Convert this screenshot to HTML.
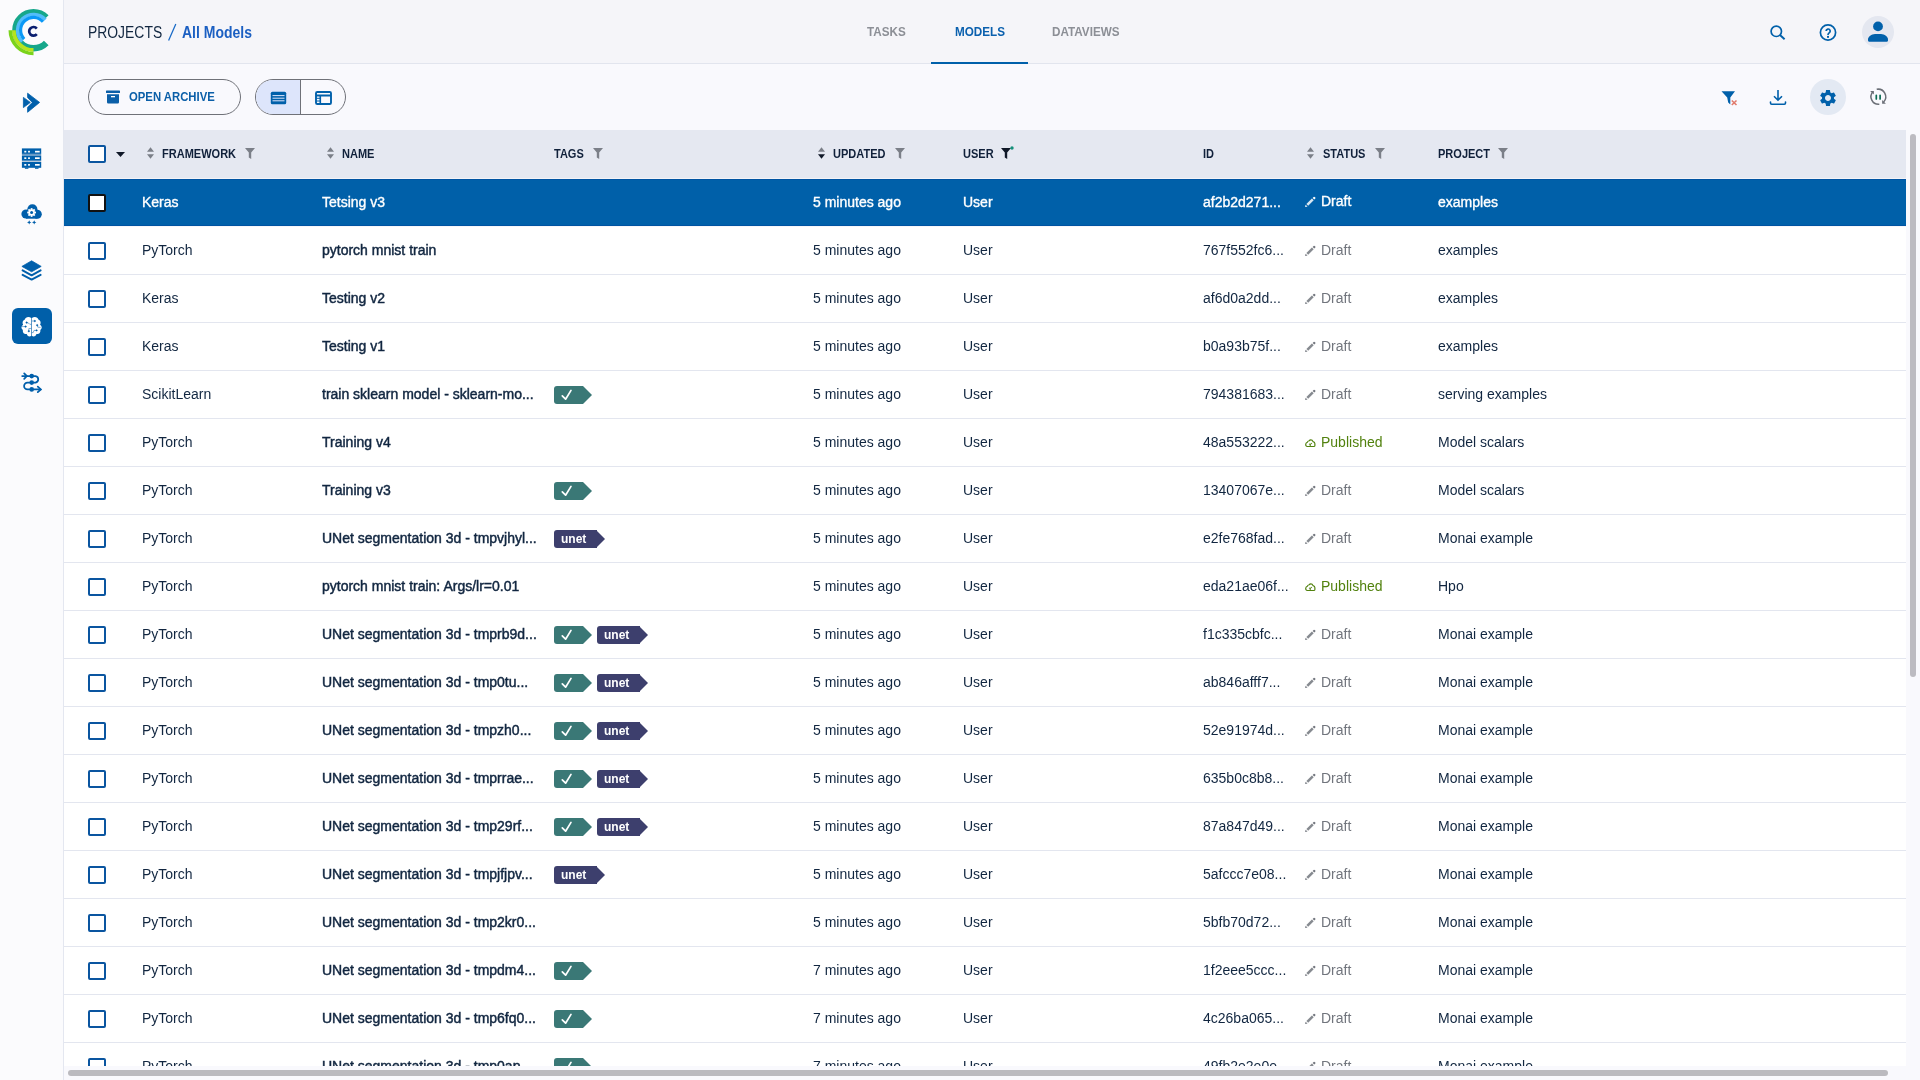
<!DOCTYPE html>
<html><head><meta charset="utf-8">
<style>
*{box-sizing:border-box;margin:0;padding:0}
html,body{width:1920px;height:1080px;overflow:hidden}
body{background:#f9f9fd;font-family:"Liberation Sans",sans-serif;color:#112640;position:relative;-webkit-font-smoothing:antialiased}
#sb,#hd,#th,#tb,#arch,#vt{will-change:transform}
.abs{position:absolute}
/* sidebar */
#sb{position:absolute;left:0;top:0;width:64px;height:1080px;background:#fbfbfd;border-right:1px solid #e4e7f0}
.nav{position:absolute;left:0;width:64px;height:40px;display:flex;align-items:center;justify-content:center;color:#0060aa}
.nav svg{display:block}
.nav.act .bg{position:absolute;left:12px;top:0;width:40px;height:36px;background:#005fa9;border-radius:7px}
/* top header */
#hd{position:absolute;left:64px;top:0;width:1856px;height:64px;background:#f5f5f9;border-bottom:1px solid #e2e5ee}
.bcp,.bcs,.bca{position:absolute;top:23px;white-space:nowrap;line-height:20px;transform-origin:0 0}
.bcp{font-size:15.8px;color:#112640;transform:scaleX(0.88)}
.bcs{font-size:17px;color:#1769c6;top:21px}
.bca{font-size:15.8px;font-weight:700;color:#1b5fc2;transform:scaleX(0.885)}
.tab{position:absolute;top:24px;font-size:13.6px;font-weight:700;color:#8c8f96;line-height:16px;transform-origin:0 0;transform:scaleX(0.86)}
.tab.on{color:#0a60ae}
#tabline{position:absolute;left:867px;top:61.5px;width:97px;height:2.5px;background:#0060aa}
.hic{position:absolute;color:#0060aa}
/* toolbar */
#arch{position:absolute;left:88px;top:79px;width:153px;height:36px;border:1px solid #6f7178;border-radius:18px;color:#0b5fa8}
#arch .t{position:absolute;left:40px;top:9px;font-size:12.8px;font-weight:700;line-height:16px;transform-origin:0 0;transform:scaleX(0.885)}
#vt{position:absolute;left:255px;top:79px;width:91px;height:36px;border:1px solid #6f7178;border-radius:18px;overflow:hidden}
#vt .l{position:absolute;left:0;top:0;width:45px;height:34px;background:#dde5fb;border-right:1px solid #6f7178}
.tic{position:absolute;color:#0060aa}
#gearbg{position:absolute;left:1810px;top:79px;width:36px;height:36px;border-radius:50%;background:#e3e9f3}
/* table */
#th{position:absolute;left:64px;top:130px;width:1842px;height:48px;background:#e5e8f1}
.h{position:absolute;top:17px;font-size:12.6px;font-weight:700;color:#10203a;line-height:15px;white-space:nowrap;transform-origin:0 0;transform:scaleX(0.875)}
.sort{position:absolute;top:17px}
.filt{position:absolute;top:18px}
#tb{position:absolute;left:64px;top:178px;width:1842px;height:888px;overflow:hidden;background:#fff}
.row{position:absolute;left:0;width:1842px;height:48px;background:#fff;border-bottom:1px solid #e3e6ef}
.row.sel{height:49px;border-top:1px solid #f3f3f7;border-bottom:1px solid #f6f6f9;box-shadow:inset 0 1px #0053a2,inset 0 -1px #0053a2}
.row.sel{background:#0060a9;color:#fff}
.cb{position:absolute;left:24px;top:15px;width:18px;height:18px;border:2px solid #0a55a0;border-radius:2px;background:#fff}
.sel .cb{border-color:#111;top:15px}
.c{position:absolute;top:15px;font-size:14px;line-height:17px;white-space:nowrap}
.fw{left:78px}
.nm{left:258px;-webkit-text-stroke:0.45px currentColor}
.tg{left:490px;top:15px;height:18px;display:flex}
.up{left:749px}
.us{left:899px}
.id{left:1139px}
.st{left:1240px;display:flex;align-items:center}
.sel .st{top:14px}
.st .si{margin-right:5px;position:relative;top:0px}
.dr{color:#71757d}
.pub{color:#52820f}
.sel .c{color:#fff;-webkit-text-stroke:0.35px #fff}
.pj{left:1374px}
.tag{position:relative;display:inline-block;height:18px;margin-right:5px;color:#fff;font-size:12px;font-weight:700;line-height:18px}
.tag .tb{display:inline-block;height:18px;border-radius:3px 0 0 3px;padding:0 0 0 5px}
.tag:after{content:"";position:absolute;right:0;top:0;border-top:9px solid transparent;border-bottom:9px solid transparent;border-left:9px solid currentColor}
.tc{color:#3a7876;padding-right:9px}
.tc .tb{background:#3a7876;color:#fff;width:29px;padding-left:6px}
.tu{color:#3d3f6d;padding-right:8px}
.tu .tb{background:#3d3f6d;color:#fff;width:43px;padding-left:7px}
/* scrollbars */
#vs{position:absolute;left:1910px;top:134px;width:6px;height:543px;border-radius:3px;background:#bcbbc1}
#hs{position:absolute;left:68px;top:1070px;width:1820px;height:6px;border-radius:3px;background:#bbbabf}
</style></head>
<body>
<div id="sb">
  <!-- logo -->
  <svg class="abs" style="left:0;top:0" width="64" height="64" viewBox="0 0 64 64">
    <path d="M46.26 17.54 A18.05 18.05 0 1 0 46.26 43.06" fill="none" stroke="#16a78b" stroke-width="6.5"/>
    <path d="M45.43 19.56 A16.05 16.05 0 1 0 22.15 41.65" fill="none" stroke="#52bdf9" stroke-width="3.3"/>
    <path d="M43.01 21.74 A12.8 12.8 0 1 0 24.14 39.03" fill="none" stroke="#0a98f6" stroke-width="3.2"/>
    <path d="M10.3 30.3 A23.2 23.2 0 0 0 33.5 53.5" fill="none" stroke="#7bd31b" stroke-width="3.6"/>
    <path d="M13.9 30.3 A19.6 19.6 0 0 0 33.5 49.9" fill="none" stroke="#b7e41d" stroke-width="3.6"/>
    <path d="M36.79 28.54 A4.3 4.3 0 1 0 36.79 34.06" fill="none" stroke="#0b1f70" stroke-width="2.7"/>
  </svg>
  <!-- nav icons -->
  <div class="abs" style="left:12px;top:308px;width:40px;height:36px;background:#005fa9;border-radius:6px"></div>
  <svg class="abs" style="left:0;top:0" width="64" height="420" viewBox="0 0 64 420">
    <g fill="#005fab" stroke="#005fab" stroke-linejoin="round">
      <path d="M27.6 93.2 L39.6 102.4 L27.6 112.3 L27.6 107.3 L32.3 102.4 L27.6 97.6 Z" stroke-width="0.8"/>
      <path d="M23.4 97.4 L30.3 102.4 L23.4 107.6 Z" stroke-width="0.8"/>
    </g>
    <g fill="#005fab">
      <rect x="21.9" y="148.4" width="19.3" height="5.5"/>
      <rect x="21.9" y="153.9" width="19.3" height="2" fill="#6a9bc6"/>
      <rect x="21.9" y="155.9" width="19.3" height="4.9"/>
      <rect x="21.9" y="160.8" width="19.3" height="1.2" fill="#b9cadc"/>
      <rect x="21.9" y="162" width="19.3" height="5.8"/>
      <rect x="24.9" y="167.5" width="3.5" height="1.3"/>
      <rect x="35" y="167.5" width="3.5" height="1.3"/>
    </g>
    <g fill="#fff">
      <rect x="24.3" y="150.8" width="2" height="1.7"/><rect x="28.1" y="150.8" width="1.8" height="1.7"/><rect x="35" y="150.8" width="4.7" height="1.7"/>
      <rect x="24.3" y="157.3" width="2" height="1.7"/><rect x="28.1" y="157.3" width="1.8" height="1.7"/><rect x="35" y="157.3" width="4.7" height="1.7"/>
      <rect x="24.3" y="164" width="2" height="1.7"/><rect x="28.1" y="164" width="1.8" height="1.7"/><rect x="35" y="164" width="4.7" height="1.7"/>
    </g>
    <!-- cloud -->
    <g fill="#005fab">
      <circle cx="26" cy="214" r="4.6"/>
      <circle cx="32.4" cy="209.4" r="5.1"/>
      <circle cx="37.3" cy="214.2" r="4.5"/>
      <rect x="26" y="212" width="11.3" height="6.7"/>
      <path d="M29.2 220.2 L29.9 221.7 L31.4 222.4 L29.9 223.1 L29.2 224.6 L28.5 223.1 L27 222.4 L28.5 221.7 Z"/>
      <path d="M34.2 220.2 L34.9 221.7 L36.4 222.4 L34.9 223.1 L34.2 224.6 L33.5 223.1 L32 222.4 L33.5 221.7 Z"/>
    </g>
    <g transform="translate(31.6 212.5)">
      <circle r="3.2" fill="#fff"/>
      <g fill="#fff"><rect x="-0.9" y="-4.4" width="1.8" height="8.8"/><rect x="-4.4" y="-0.9" width="8.8" height="1.8"/><rect x="-0.9" y="-4.4" width="1.8" height="8.8" transform="rotate(45)"/><rect x="-0.9" y="-4.4" width="1.8" height="8.8" transform="rotate(-45)"/></g>
      <circle r="1.5" fill="#005fab"/>
    </g>
    <!-- layers -->
    <path d="M21.9 266.4 L31.6 260.8 L41.2 266.4 L31.6 271.8 Z" fill="#005fab" stroke="#005fab" stroke-width="0.8" stroke-linejoin="round"/>
    <path d="M22.6 270.4 L31.6 275.3 L40.6 270.4" fill="none" stroke="#005fab" stroke-width="2" stroke-linecap="round" stroke-linejoin="round"/>
    <path d="M22.6 274.9 L31.6 279.6 L40.6 274.9" fill="none" stroke="#005fab" stroke-width="2" stroke-linecap="round" stroke-linejoin="round"/>
    <!-- brain -->
    <g fill="#fff">
      <path d="M31.3 318 C29 316 25.4 316.8 24.8 319.5 C22.5 320.3 22 323.1 23.1 324.7 C20.9 326.1 20.9 328.6 22.9 329.9 C22.3 332.4 24.3 334.4 26.7 334 C27.5 336.6 30 337.2 31.3 335.8 Z"/>
      <path d="M31.9 318 C34.2 316 37.8 316.8 38.4 319.5 C40.7 320.3 41.2 323.1 40.1 324.7 C42.3 326.1 42.3 328.6 40.3 329.9 C40.9 332.4 38.9 334.4 36.5 334 C35.7 336.6 33.2 337.2 31.9 335.8 Z"/>
    </g>
    <g stroke="#005fa9" stroke-width="0.5" fill="#005fa9">
      <path d="M21.5 326.6 H25.3" fill="none"/><circle cx="25.6" cy="326.6" r="0.75"/>
      <circle cx="26.6" cy="322.6" r="0.75"/><path d="M26.6 322.6 L28.6 323.1 L29.8 324.3 L31.3 324.3" fill="none"/>
      <circle cx="34.8" cy="321" r="0.75"/><path d="M31.9 321 H34.8" fill="none"/>
      <circle cx="37.2" cy="325.2" r="0.75"/><path d="M37.2 325.2 L37.8 327.2 L40.6 327.4" fill="none"/>
      <circle cx="28.8" cy="331.2" r="0.75"/><path d="M28.8 331.2 V328.6 L31.3 328.4" fill="none"/>
      <circle cx="36.6" cy="330.4" r="0.7"/><path d="M36.6 330.4 H34 L33.2 332.6 H31.9" fill="none"/>
    </g>
    <!-- pipeline -->
    <g fill="none" stroke="#005fab" stroke-width="1.8" stroke-linecap="round">
      <path d="M22.2 376.1 H35.5 A3.3 3.3 0 0 1 35.5 382.6 H27.5 A3.4 3.4 0 0 0 27.5 389.4 H40.5"/>
      <path d="M24.2 373.4 L26.8 376.1 L24.2 378.8"/>
      <path d="M37.8 386.7 L40.8 389.4 L37.8 392.1"/>
    </g>
    <g fill="#005fab">
      <circle cx="31.7" cy="376.1" r="2.3"/><circle cx="31.7" cy="382.6" r="2.3"/><circle cx="31.7" cy="389.4" r="2.3"/>
    </g>
  </svg>
</div>

<div id="hd">
  <div class="bcp" style="left:24px">PROJECTS</div><svg class="abs" style="left:102px;top:23px" width="12" height="19" viewBox="0 0 12 19"><path d="M9.8 1 L2.6 17.6" stroke="#1769c6" stroke-width="1.3"/></svg><div class="bca" style="left:118px">All Models</div>
  <div class="tab" style="left:803px">TASKS</div>
  <div class="tab on" style="left:891px">MODELS</div>
  <div class="tab" style="left:988px">DATAVIEWS</div>
  <div id="tabline"></div>
  <!-- search -->
  <svg class="hic" style="left:1706px;top:25px" width="16" height="16" viewBox="0 0 16 16"><circle cx="6.3" cy="6.3" r="5.2" fill="none" stroke="#0060aa" stroke-width="1.7"/><path d="M10 10 L14.6 14.3" stroke="#0060aa" stroke-width="1.9"/></svg>
  <!-- help -->
  <svg class="hic" style="left:1755px;top:23px" width="18" height="19" viewBox="0 0 18 19"><circle cx="9" cy="9.5" r="7.6" fill="none" stroke="#0060aa" stroke-width="1.7"/><path d="M7.1 8.1 A2.05 2.05 0 1 1 10.1 9.9 C9.3 10.4 9 10.8 9 11.9" fill="none" stroke="#0060aa" stroke-width="1.7"/><rect x="8" y="12.9" width="2" height="1.9" fill="#0060aa"/></svg>
  <!-- avatar -->
  <div class="abs" style="left:1798px;top:16px;width:32px;height:32px;border-radius:50%;background:#e4e7f0"></div>
  <svg class="hic" style="left:1804px;top:21px" width="20" height="21" viewBox="0 0 20 21"><circle cx="10" cy="5.4" r="4.9" fill="#0060aa"/><path d="M0 18.2 C0 15.6 3.5 13 7 12.9 L13 12.9 C16.5 13 20 15.6 20 18.2 V19.6 Q20 20.7 19 20.7 H1 Q0 20.7 0 19.6 Z" fill="#0060aa"/></svg>
</div>

<!-- toolbar -->
<div id="arch">
  <svg class="abs" style="left:17px;top:10px" width="14" height="14" viewBox="0 0 14 14"><rect x="0" y="0.5" width="14" height="2.6" rx="0.6" fill="#0b5fa8"/><path d="M1 4.2 h12 v8 a1.3 1.3 0 0 1 -1.3 1.3 h-9.4 a1.3 1.3 0 0 1 -1.3 -1.3 Z" fill="#0b5fa8"/><rect x="5" y="6" width="4" height="1.3" fill="#fff"/></svg>
  <div class="t">OPEN ARCHIVE</div>
</div>
<div id="vt">
  <div class="l"></div>
  <svg class="abs" style="left:14px;top:11px" width="17" height="14" viewBox="0 0 17 14"><rect x="0.8" y="0.8" width="15.4" height="12.4" rx="1.5" fill="#0060aa"/><path d="M2.5 4.6 h12 M2.5 7.2 h12 M2.5 9.8 h12" stroke="#dde5fb" stroke-width="1"/></svg>
  <svg class="abs" style="left:59px;top:11px" width="17" height="14" viewBox="0 0 17 14"><rect x="1" y="1" width="15" height="12" rx="1.3" fill="none" stroke="#0060aa" stroke-width="1.9"/><path d="M1 4.5 h15" stroke="#0060aa" stroke-width="1.9"/><path d="M5.3 4.5 v8.5" stroke="#0060aa" stroke-width="1.6"/><path d="M1.5 7.3 h4 M1.5 10 h4" stroke="#0060aa" stroke-width="1"/></svg>
</div>
<!-- right toolbar icons -->
<svg class="tic" style="left:1721px;top:91px" width="17" height="15" viewBox="0 0 17 15"><path d="M0.5 0.2 H14 L9.3 6.4 V13.6 L7.2 11.6 L6.2 6.4 Z" fill="#0060aa"/><path d="M10.8 9.5 L15.5 14 M15.5 9.5 L10.8 14" stroke="#e07a6c" stroke-width="1.6"/></svg>
<svg class="tic" style="left:1769px;top:89px" width="18" height="17" viewBox="0 0 18 17"><path d="M9 1 V11 M5 7.3 L9 11.2 L13 7.3" fill="none" stroke="#0060aa" stroke-width="1.6"/><path d="M1.5 13 V14 Q1.5 15.2 2.7 15.2 H15.3 Q16.5 15.2 16.5 14 V13" fill="none" stroke="#0060aa" stroke-width="1.6" stroke-linecap="round"/></svg>
<div id="gearbg"></div>
<svg class="tic" style="left:1818px;top:88px" width="20" height="20" viewBox="0 0 24 24"><path fill="#0060aa" d="M19.14 12.94c.04-.3.06-.61.06-.94 0-.32-.02-.64-.07-.94l2.03-1.58a.49.49 0 0 0 .12-.61l-1.92-3.32a.488.488 0 0 0-.59-.22l-2.39.96c-.5-.38-1.03-.7-1.62-.94l-.36-2.54a.484.484 0 0 0-.48-.41h-3.84c-.24 0-.43.17-.47.41l-.36 2.54c-.59.24-1.13.57-1.62.94l-2.39-.96c-.22-.08-.47 0-.59.22L2.74 8.87c-.12.21-.08.47.12.61l2.03 1.58c-.05.3-.09.63-.09.94s.02.64.07.94l-2.03 1.58a.49.49 0 0 0-.12.61l1.92 3.32c.12.22.37.29.59.22l2.39-.96c.5.38 1.03.7 1.62.94l.36 2.54c.05.24.24.41.48.41h3.84c.24 0 .44-.17.47-.41l.36-2.54c.59-.24 1.13-.56 1.62-.94l2.39.96c.22.08.47 0 .59-.22l1.92-3.32c.12-.22.07-.47-.12-.61l-2.01-1.58zM12 15.6c-1.98 0-3.6-1.62-3.6-3.6s1.62-3.6 3.6-3.6 3.6 1.62 3.6 3.6-1.62 3.6-3.6 3.6z"/></svg>
<svg class="tic" style="left:1864px;top:84px" width="28" height="26" viewBox="0 0 28 26"><path d="M8.9 7.7 A7.6 7.6 0 0 0 15.3 20.3" fill="none" stroke="#6b6f77" stroke-width="1.5"/><path d="M12.7 5.3 A7.6 7.6 0 0 1 19.6 18" fill="none" stroke="#6b6f77" stroke-width="1.5"/><path d="M6.1 7 H9.9 V10.6 Z" fill="#6b6f77"/><path d="M18.1 15.9 V19.8 H21.9 Z" fill="#6b6f77"/><path d="M12.3 11.3 V14.9 M16.1 11.3 V14.9" stroke="#0b6b52" stroke-width="1.7" stroke-linecap="round"/></svg>

<!-- table header -->
<div id="th">
  <span class="abs" style="left:24px;top:15px;width:18px;height:18px;border:2px solid #0a55a0;border-radius:2px;background:#fff"></span>
  <svg class="abs" style="left:52px;top:22px" width="9" height="6" viewBox="0 0 9 6"><path d="M0 0 H9 L4.5 5 Z" fill="#101828"/></svg>
  <svg class="sort" style="left:83px" width="7" height="12" viewBox="0 0 7 12"><path d="M0 4.8 L3.5 0.3 L7 4.8 Z M0 7.2 L3.5 11.7 L7 7.2 Z" fill="#7b7f88"/></svg>
  <span class="h" style="left:98px">FRAMEWORK</span>
  <svg class="filt" style="left:181px" width="10" height="11" viewBox="0 0 10 11"><path d="M0 0 H10 L6.2 4.5 V11 L3.8 9.5 V4.5 Z" fill="#7b7f88"/></svg>
  <svg class="sort" style="left:263px" width="7" height="12" viewBox="0 0 7 12"><path d="M0 4.8 L3.5 0.3 L7 4.8 Z M0 7.2 L3.5 11.7 L7 7.2 Z" fill="#7b7f88"/></svg>
  <span class="h" style="left:278px">NAME</span>
  <span class="h" style="left:490px">TAGS</span>
  <svg class="filt" style="left:529px" width="10" height="11" viewBox="0 0 10 11"><path d="M0 0 H10 L6.2 4.5 V11 L3.8 9.5 V4.5 Z" fill="#7b7f88"/></svg>
  <svg class="sort" style="left:754px" width="7" height="12" viewBox="0 0 7 12"><path d="M0 4.8 L3.5 0.3 L7 4.8 Z" fill="#7b7f88"/><path d="M0 7.2 L3.5 11.7 L7 7.2 Z" fill="#101828"/></svg>
  <span class="h" style="left:769px">UPDATED</span>
  <svg class="filt" style="left:831px" width="10" height="11" viewBox="0 0 10 11"><path d="M0 0 H10 L6.2 4.5 V11 L3.8 9.5 V4.5 Z" fill="#7b7f88"/></svg>
  <span class="h" style="left:899px">USER</span>
  <svg class="abs" style="left:937px;top:16px" width="13" height="13" viewBox="0 0 13 13"><path d="M0 2 H10 L6.2 6.5 V13 L3.8 11.5 V6.5 Z" fill="#101828"/><circle cx="11" cy="2" r="1.7" fill="#14907a"/></svg>
  <span class="h" style="left:1139px">ID</span>
  <svg class="sort" style="left:1243px" width="7" height="12" viewBox="0 0 7 12"><path d="M0 4.8 L3.5 0.3 L7 4.8 Z M0 7.2 L3.5 11.7 L7 7.2 Z" fill="#7b7f88"/></svg>
  <span class="h" style="left:1259px">STATUS</span>
  <svg class="filt" style="left:1311px" width="10" height="11" viewBox="0 0 10 11"><path d="M0 0 H10 L6.2 4.5 V11 L3.8 9.5 V4.5 Z" fill="#7b7f88"/></svg>
  <span class="h" style="left:1374px">PROJECT</span>
  <svg class="filt" style="left:1434px" width="10" height="11" viewBox="0 0 10 11"><path d="M0 0 H10 L6.2 4.5 V11 L3.8 9.5 V4.5 Z" fill="#7b7f88"/></svg>
</div>

<div id="tb">
<div class="row sel" style="top:0px">
<span class="cb"></span>
<span class="c fw">Keras</span>
<span class="c nm">Tetsing v3</span>
<span class="c tg"></span>
<span class="c up">5 minutes ago</span>
<span class="c us">User</span>
<span class="c id">af2b2d271...</span>
<span class="c st dr"><svg class="si" width="12" height="12" viewBox="0 0 12 12"><path d="M1.1 11.1 L1.6 8.7 L3.5 10.6 Z" fill="currentColor"/><path d="M2.4 8 L7.9 2.5 L9.7 4.3 L4.2 9.8 Z" fill="currentColor" fill-opacity="0.85"/><path d="M8.6 1.9 L9.6 0.9 Q10.1 0.5 10.6 0.9 L11.3 1.6 Q11.7 2.1 11.3 2.6 L10.3 3.6 Z" fill="currentColor"/></svg>Draft</span>
<span class="c pj">examples</span>
</div>
<div class="row" style="top:49px">
<span class="cb"></span>
<span class="c fw">PyTorch</span>
<span class="c nm">pytorch mnist train</span>
<span class="c tg"></span>
<span class="c up">5 minutes ago</span>
<span class="c us">User</span>
<span class="c id">767f552fc6...</span>
<span class="c st dr"><svg class="si" width="12" height="12" viewBox="0 0 12 12"><path d="M1.1 11.1 L1.6 8.7 L3.5 10.6 Z" fill="currentColor"/><path d="M2.4 8 L7.9 2.5 L9.7 4.3 L4.2 9.8 Z" fill="currentColor" fill-opacity="0.85"/><path d="M8.6 1.9 L9.6 0.9 Q10.1 0.5 10.6 0.9 L11.3 1.6 Q11.7 2.1 11.3 2.6 L10.3 3.6 Z" fill="currentColor"/></svg>Draft</span>
<span class="c pj">examples</span>
</div>
<div class="row" style="top:97px">
<span class="cb"></span>
<span class="c fw">Keras</span>
<span class="c nm">Testing v2</span>
<span class="c tg"></span>
<span class="c up">5 minutes ago</span>
<span class="c us">User</span>
<span class="c id">af6d0a2dd...</span>
<span class="c st dr"><svg class="si" width="12" height="12" viewBox="0 0 12 12"><path d="M1.1 11.1 L1.6 8.7 L3.5 10.6 Z" fill="currentColor"/><path d="M2.4 8 L7.9 2.5 L9.7 4.3 L4.2 9.8 Z" fill="currentColor" fill-opacity="0.85"/><path d="M8.6 1.9 L9.6 0.9 Q10.1 0.5 10.6 0.9 L11.3 1.6 Q11.7 2.1 11.3 2.6 L10.3 3.6 Z" fill="currentColor"/></svg>Draft</span>
<span class="c pj">examples</span>
</div>
<div class="row" style="top:145px">
<span class="cb"></span>
<span class="c fw">Keras</span>
<span class="c nm">Testing v1</span>
<span class="c tg"></span>
<span class="c up">5 minutes ago</span>
<span class="c us">User</span>
<span class="c id">b0a93b75f...</span>
<span class="c st dr"><svg class="si" width="12" height="12" viewBox="0 0 12 12"><path d="M1.1 11.1 L1.6 8.7 L3.5 10.6 Z" fill="currentColor"/><path d="M2.4 8 L7.9 2.5 L9.7 4.3 L4.2 9.8 Z" fill="currentColor" fill-opacity="0.85"/><path d="M8.6 1.9 L9.6 0.9 Q10.1 0.5 10.6 0.9 L11.3 1.6 Q11.7 2.1 11.3 2.6 L10.3 3.6 Z" fill="currentColor"/></svg>Draft</span>
<span class="c pj">examples</span>
</div>
<div class="row" style="top:193px">
<span class="cb"></span>
<span class="c fw">ScikitLearn</span>
<span class="c nm">train sklearn model - sklearn-mo...</span>
<span class="c tg"><span class="tag tc"><span class="tb"><svg width="29" height="18" viewBox="0 0 29 18" style="display:block;margin-left:-6px"><path d="M8.3 9.8 L11.6 13.2 L17 4.4" fill="none" stroke="#fff" stroke-width="1.7" stroke-linecap="round" stroke-linejoin="round"/></svg></span></span></span>
<span class="c up">5 minutes ago</span>
<span class="c us">User</span>
<span class="c id">794381683...</span>
<span class="c st dr"><svg class="si" width="12" height="12" viewBox="0 0 12 12"><path d="M1.1 11.1 L1.6 8.7 L3.5 10.6 Z" fill="currentColor"/><path d="M2.4 8 L7.9 2.5 L9.7 4.3 L4.2 9.8 Z" fill="currentColor" fill-opacity="0.85"/><path d="M8.6 1.9 L9.6 0.9 Q10.1 0.5 10.6 0.9 L11.3 1.6 Q11.7 2.1 11.3 2.6 L10.3 3.6 Z" fill="currentColor"/></svg>Draft</span>
<span class="c pj">serving examples</span>
</div>
<div class="row" style="top:241px">
<span class="cb"></span>
<span class="c fw">PyTorch</span>
<span class="c nm">Training v4</span>
<span class="c tg"></span>
<span class="c up">5 minutes ago</span>
<span class="c us">User</span>
<span class="c id">48a553222...</span>
<span class="c st pub"><svg class="si" width="12" height="12" viewBox="0 0 12 12"><g transform="translate(0.7 0) scale(1.04 1)"><path d="M2.6 9.5 C1.2 9.5 0.9 8.2 1 7.3 C1.1 6.2 1.8 5.6 2.5 5.3 C2.7 4.3 3.6 3.8 4.4 3.7 C4.8 2.9 5.4 2.9 5.9 2.9 C7 2.9 7.6 3.5 8 4.6 C9.2 4.9 9.8 5.6 9.8 6.8 L9.8 8.4 C9.8 9.1 9.3 9.5 8.6 9.5 Z" fill="none" stroke="currentColor" stroke-width="1.15"/><path d="M4.1 6.9 L5.3 7.5 L6.9 6 M5.3 7.5 V9.5" fill="none" stroke="currentColor" stroke-width="1"/></g></svg>Published</span>
<span class="c pj">Model scalars</span>
</div>
<div class="row" style="top:289px">
<span class="cb"></span>
<span class="c fw">PyTorch</span>
<span class="c nm">Training v3</span>
<span class="c tg"><span class="tag tc"><span class="tb"><svg width="29" height="18" viewBox="0 0 29 18" style="display:block;margin-left:-6px"><path d="M8.3 9.8 L11.6 13.2 L17 4.4" fill="none" stroke="#fff" stroke-width="1.7" stroke-linecap="round" stroke-linejoin="round"/></svg></span></span></span>
<span class="c up">5 minutes ago</span>
<span class="c us">User</span>
<span class="c id">13407067e...</span>
<span class="c st dr"><svg class="si" width="12" height="12" viewBox="0 0 12 12"><path d="M1.1 11.1 L1.6 8.7 L3.5 10.6 Z" fill="currentColor"/><path d="M2.4 8 L7.9 2.5 L9.7 4.3 L4.2 9.8 Z" fill="currentColor" fill-opacity="0.85"/><path d="M8.6 1.9 L9.6 0.9 Q10.1 0.5 10.6 0.9 L11.3 1.6 Q11.7 2.1 11.3 2.6 L10.3 3.6 Z" fill="currentColor"/></svg>Draft</span>
<span class="c pj">Model scalars</span>
</div>
<div class="row" style="top:337px">
<span class="cb"></span>
<span class="c fw">PyTorch</span>
<span class="c nm">UNet segmentation 3d - tmpvjhyl...</span>
<span class="c tg"><span class="tag tu"><span class="tb">unet</span></span></span>
<span class="c up">5 minutes ago</span>
<span class="c us">User</span>
<span class="c id">e2fe768fad...</span>
<span class="c st dr"><svg class="si" width="12" height="12" viewBox="0 0 12 12"><path d="M1.1 11.1 L1.6 8.7 L3.5 10.6 Z" fill="currentColor"/><path d="M2.4 8 L7.9 2.5 L9.7 4.3 L4.2 9.8 Z" fill="currentColor" fill-opacity="0.85"/><path d="M8.6 1.9 L9.6 0.9 Q10.1 0.5 10.6 0.9 L11.3 1.6 Q11.7 2.1 11.3 2.6 L10.3 3.6 Z" fill="currentColor"/></svg>Draft</span>
<span class="c pj">Monai example</span>
</div>
<div class="row" style="top:385px">
<span class="cb"></span>
<span class="c fw">PyTorch</span>
<span class="c nm">pytorch mnist train: Args/lr=0.01</span>
<span class="c tg"></span>
<span class="c up">5 minutes ago</span>
<span class="c us">User</span>
<span class="c id">eda21ae06f...</span>
<span class="c st pub"><svg class="si" width="12" height="12" viewBox="0 0 12 12"><g transform="translate(0.7 0) scale(1.04 1)"><path d="M2.6 9.5 C1.2 9.5 0.9 8.2 1 7.3 C1.1 6.2 1.8 5.6 2.5 5.3 C2.7 4.3 3.6 3.8 4.4 3.7 C4.8 2.9 5.4 2.9 5.9 2.9 C7 2.9 7.6 3.5 8 4.6 C9.2 4.9 9.8 5.6 9.8 6.8 L9.8 8.4 C9.8 9.1 9.3 9.5 8.6 9.5 Z" fill="none" stroke="currentColor" stroke-width="1.15"/><path d="M4.1 6.9 L5.3 7.5 L6.9 6 M5.3 7.5 V9.5" fill="none" stroke="currentColor" stroke-width="1"/></g></svg>Published</span>
<span class="c pj">Hpo</span>
</div>
<div class="row" style="top:433px">
<span class="cb"></span>
<span class="c fw">PyTorch</span>
<span class="c nm">UNet segmentation 3d - tmprb9d...</span>
<span class="c tg"><span class="tag tc"><span class="tb"><svg width="29" height="18" viewBox="0 0 29 18" style="display:block;margin-left:-6px"><path d="M8.3 9.8 L11.6 13.2 L17 4.4" fill="none" stroke="#fff" stroke-width="1.7" stroke-linecap="round" stroke-linejoin="round"/></svg></span></span><span class="tag tu"><span class="tb">unet</span></span></span>
<span class="c up">5 minutes ago</span>
<span class="c us">User</span>
<span class="c id">f1c335cbfc...</span>
<span class="c st dr"><svg class="si" width="12" height="12" viewBox="0 0 12 12"><path d="M1.1 11.1 L1.6 8.7 L3.5 10.6 Z" fill="currentColor"/><path d="M2.4 8 L7.9 2.5 L9.7 4.3 L4.2 9.8 Z" fill="currentColor" fill-opacity="0.85"/><path d="M8.6 1.9 L9.6 0.9 Q10.1 0.5 10.6 0.9 L11.3 1.6 Q11.7 2.1 11.3 2.6 L10.3 3.6 Z" fill="currentColor"/></svg>Draft</span>
<span class="c pj">Monai example</span>
</div>
<div class="row" style="top:481px">
<span class="cb"></span>
<span class="c fw">PyTorch</span>
<span class="c nm">UNet segmentation 3d - tmp0tu...</span>
<span class="c tg"><span class="tag tc"><span class="tb"><svg width="29" height="18" viewBox="0 0 29 18" style="display:block;margin-left:-6px"><path d="M8.3 9.8 L11.6 13.2 L17 4.4" fill="none" stroke="#fff" stroke-width="1.7" stroke-linecap="round" stroke-linejoin="round"/></svg></span></span><span class="tag tu"><span class="tb">unet</span></span></span>
<span class="c up">5 minutes ago</span>
<span class="c us">User</span>
<span class="c id">ab846afff7...</span>
<span class="c st dr"><svg class="si" width="12" height="12" viewBox="0 0 12 12"><path d="M1.1 11.1 L1.6 8.7 L3.5 10.6 Z" fill="currentColor"/><path d="M2.4 8 L7.9 2.5 L9.7 4.3 L4.2 9.8 Z" fill="currentColor" fill-opacity="0.85"/><path d="M8.6 1.9 L9.6 0.9 Q10.1 0.5 10.6 0.9 L11.3 1.6 Q11.7 2.1 11.3 2.6 L10.3 3.6 Z" fill="currentColor"/></svg>Draft</span>
<span class="c pj">Monai example</span>
</div>
<div class="row" style="top:529px">
<span class="cb"></span>
<span class="c fw">PyTorch</span>
<span class="c nm">UNet segmentation 3d - tmpzh0...</span>
<span class="c tg"><span class="tag tc"><span class="tb"><svg width="29" height="18" viewBox="0 0 29 18" style="display:block;margin-left:-6px"><path d="M8.3 9.8 L11.6 13.2 L17 4.4" fill="none" stroke="#fff" stroke-width="1.7" stroke-linecap="round" stroke-linejoin="round"/></svg></span></span><span class="tag tu"><span class="tb">unet</span></span></span>
<span class="c up">5 minutes ago</span>
<span class="c us">User</span>
<span class="c id">52e91974d...</span>
<span class="c st dr"><svg class="si" width="12" height="12" viewBox="0 0 12 12"><path d="M1.1 11.1 L1.6 8.7 L3.5 10.6 Z" fill="currentColor"/><path d="M2.4 8 L7.9 2.5 L9.7 4.3 L4.2 9.8 Z" fill="currentColor" fill-opacity="0.85"/><path d="M8.6 1.9 L9.6 0.9 Q10.1 0.5 10.6 0.9 L11.3 1.6 Q11.7 2.1 11.3 2.6 L10.3 3.6 Z" fill="currentColor"/></svg>Draft</span>
<span class="c pj">Monai example</span>
</div>
<div class="row" style="top:577px">
<span class="cb"></span>
<span class="c fw">PyTorch</span>
<span class="c nm">UNet segmentation 3d - tmprrae...</span>
<span class="c tg"><span class="tag tc"><span class="tb"><svg width="29" height="18" viewBox="0 0 29 18" style="display:block;margin-left:-6px"><path d="M8.3 9.8 L11.6 13.2 L17 4.4" fill="none" stroke="#fff" stroke-width="1.7" stroke-linecap="round" stroke-linejoin="round"/></svg></span></span><span class="tag tu"><span class="tb">unet</span></span></span>
<span class="c up">5 minutes ago</span>
<span class="c us">User</span>
<span class="c id">635b0c8b8...</span>
<span class="c st dr"><svg class="si" width="12" height="12" viewBox="0 0 12 12"><path d="M1.1 11.1 L1.6 8.7 L3.5 10.6 Z" fill="currentColor"/><path d="M2.4 8 L7.9 2.5 L9.7 4.3 L4.2 9.8 Z" fill="currentColor" fill-opacity="0.85"/><path d="M8.6 1.9 L9.6 0.9 Q10.1 0.5 10.6 0.9 L11.3 1.6 Q11.7 2.1 11.3 2.6 L10.3 3.6 Z" fill="currentColor"/></svg>Draft</span>
<span class="c pj">Monai example</span>
</div>
<div class="row" style="top:625px">
<span class="cb"></span>
<span class="c fw">PyTorch</span>
<span class="c nm">UNet segmentation 3d - tmp29rf...</span>
<span class="c tg"><span class="tag tc"><span class="tb"><svg width="29" height="18" viewBox="0 0 29 18" style="display:block;margin-left:-6px"><path d="M8.3 9.8 L11.6 13.2 L17 4.4" fill="none" stroke="#fff" stroke-width="1.7" stroke-linecap="round" stroke-linejoin="round"/></svg></span></span><span class="tag tu"><span class="tb">unet</span></span></span>
<span class="c up">5 minutes ago</span>
<span class="c us">User</span>
<span class="c id">87a847d49...</span>
<span class="c st dr"><svg class="si" width="12" height="12" viewBox="0 0 12 12"><path d="M1.1 11.1 L1.6 8.7 L3.5 10.6 Z" fill="currentColor"/><path d="M2.4 8 L7.9 2.5 L9.7 4.3 L4.2 9.8 Z" fill="currentColor" fill-opacity="0.85"/><path d="M8.6 1.9 L9.6 0.9 Q10.1 0.5 10.6 0.9 L11.3 1.6 Q11.7 2.1 11.3 2.6 L10.3 3.6 Z" fill="currentColor"/></svg>Draft</span>
<span class="c pj">Monai example</span>
</div>
<div class="row" style="top:673px">
<span class="cb"></span>
<span class="c fw">PyTorch</span>
<span class="c nm">UNet segmentation 3d - tmpjfjpv...</span>
<span class="c tg"><span class="tag tu"><span class="tb">unet</span></span></span>
<span class="c up">5 minutes ago</span>
<span class="c us">User</span>
<span class="c id">5afccc7e08...</span>
<span class="c st dr"><svg class="si" width="12" height="12" viewBox="0 0 12 12"><path d="M1.1 11.1 L1.6 8.7 L3.5 10.6 Z" fill="currentColor"/><path d="M2.4 8 L7.9 2.5 L9.7 4.3 L4.2 9.8 Z" fill="currentColor" fill-opacity="0.85"/><path d="M8.6 1.9 L9.6 0.9 Q10.1 0.5 10.6 0.9 L11.3 1.6 Q11.7 2.1 11.3 2.6 L10.3 3.6 Z" fill="currentColor"/></svg>Draft</span>
<span class="c pj">Monai example</span>
</div>
<div class="row" style="top:721px">
<span class="cb"></span>
<span class="c fw">PyTorch</span>
<span class="c nm">UNet segmentation 3d - tmp2kr0...</span>
<span class="c tg"></span>
<span class="c up">5 minutes ago</span>
<span class="c us">User</span>
<span class="c id">5bfb70d72...</span>
<span class="c st dr"><svg class="si" width="12" height="12" viewBox="0 0 12 12"><path d="M1.1 11.1 L1.6 8.7 L3.5 10.6 Z" fill="currentColor"/><path d="M2.4 8 L7.9 2.5 L9.7 4.3 L4.2 9.8 Z" fill="currentColor" fill-opacity="0.85"/><path d="M8.6 1.9 L9.6 0.9 Q10.1 0.5 10.6 0.9 L11.3 1.6 Q11.7 2.1 11.3 2.6 L10.3 3.6 Z" fill="currentColor"/></svg>Draft</span>
<span class="c pj">Monai example</span>
</div>
<div class="row" style="top:769px">
<span class="cb"></span>
<span class="c fw">PyTorch</span>
<span class="c nm">UNet segmentation 3d - tmpdm4...</span>
<span class="c tg"><span class="tag tc"><span class="tb"><svg width="29" height="18" viewBox="0 0 29 18" style="display:block;margin-left:-6px"><path d="M8.3 9.8 L11.6 13.2 L17 4.4" fill="none" stroke="#fff" stroke-width="1.7" stroke-linecap="round" stroke-linejoin="round"/></svg></span></span></span>
<span class="c up">7 minutes ago</span>
<span class="c us">User</span>
<span class="c id">1f2eee5ccc...</span>
<span class="c st dr"><svg class="si" width="12" height="12" viewBox="0 0 12 12"><path d="M1.1 11.1 L1.6 8.7 L3.5 10.6 Z" fill="currentColor"/><path d="M2.4 8 L7.9 2.5 L9.7 4.3 L4.2 9.8 Z" fill="currentColor" fill-opacity="0.85"/><path d="M8.6 1.9 L9.6 0.9 Q10.1 0.5 10.6 0.9 L11.3 1.6 Q11.7 2.1 11.3 2.6 L10.3 3.6 Z" fill="currentColor"/></svg>Draft</span>
<span class="c pj">Monai example</span>
</div>
<div class="row" style="top:817px">
<span class="cb"></span>
<span class="c fw">PyTorch</span>
<span class="c nm">UNet segmentation 3d - tmp6fq0...</span>
<span class="c tg"><span class="tag tc"><span class="tb"><svg width="29" height="18" viewBox="0 0 29 18" style="display:block;margin-left:-6px"><path d="M8.3 9.8 L11.6 13.2 L17 4.4" fill="none" stroke="#fff" stroke-width="1.7" stroke-linecap="round" stroke-linejoin="round"/></svg></span></span></span>
<span class="c up">7 minutes ago</span>
<span class="c us">User</span>
<span class="c id">4c26ba065...</span>
<span class="c st dr"><svg class="si" width="12" height="12" viewBox="0 0 12 12"><path d="M1.1 11.1 L1.6 8.7 L3.5 10.6 Z" fill="currentColor"/><path d="M2.4 8 L7.9 2.5 L9.7 4.3 L4.2 9.8 Z" fill="currentColor" fill-opacity="0.85"/><path d="M8.6 1.9 L9.6 0.9 Q10.1 0.5 10.6 0.9 L11.3 1.6 Q11.7 2.1 11.3 2.6 L10.3 3.6 Z" fill="currentColor"/></svg>Draft</span>
<span class="c pj">Monai example</span>
</div>
<div class="row" style="top:865px">
<span class="cb"></span>
<span class="c fw">PyTorch</span>
<span class="c nm">UNet segmentation 3d - tmp0ap...</span>
<span class="c tg"><span class="tag tc"><span class="tb"><svg width="29" height="18" viewBox="0 0 29 18" style="display:block;margin-left:-6px"><path d="M8.3 9.8 L11.6 13.2 L17 4.4" fill="none" stroke="#fff" stroke-width="1.7" stroke-linecap="round" stroke-linejoin="round"/></svg></span></span></span>
<span class="c up">7 minutes ago</span>
<span class="c us">User</span>
<span class="c id">49fb2e2e0e...</span>
<span class="c st dr"><svg class="si" width="12" height="12" viewBox="0 0 12 12"><path d="M1.1 11.1 L1.6 8.7 L3.5 10.6 Z" fill="currentColor"/><path d="M2.4 8 L7.9 2.5 L9.7 4.3 L4.2 9.8 Z" fill="currentColor" fill-opacity="0.85"/><path d="M8.6 1.9 L9.6 0.9 Q10.1 0.5 10.6 0.9 L11.3 1.6 Q11.7 2.1 11.3 2.6 L10.3 3.6 Z" fill="currentColor"/></svg>Draft</span>
<span class="c pj">Monai example</span>
</div>
</div>
<div id="vs"></div>
<div id="hs"></div>
</body></html>
